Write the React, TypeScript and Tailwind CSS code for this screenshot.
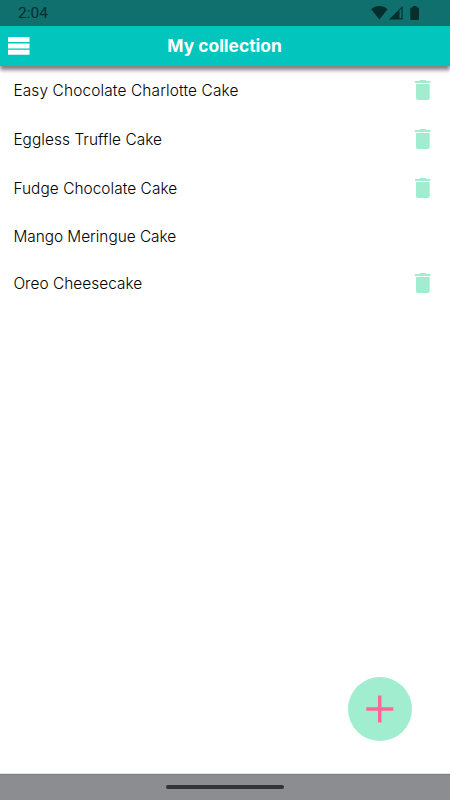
type Cake = {
  name: string;
  removable: boolean;
  tracking: string;
};

const cakes: Cake[] = [
  { name: 'Easy Chocolate Charlotte Cake', removable: true, tracking: 'tracking-[0.15px]' },
  { name: 'Eggless Truffle Cake', removable: true, tracking: 'tracking-[0.07px]' },
  { name: 'Fudge Chocolate Cake', removable: true, tracking: 'tracking-[0.06px]' },
  { name: 'Mango Meringue Cake', removable: false, tracking: 'tracking-[-0.02px]' },
  { name: 'Oreo Cheesecake', removable: true, tracking: 'tracking-[0.04px]' },
];

function StatusBar() {
  return (
    <div className="flex h-[26px] shrink-0 items-center justify-between bg-[#0f706e] pr-[30px] pl-[18px] text-[#052e2d]">
      <span className="font-[Roboto,sans-serif] text-[15.5px] leading-[26px] font-normal">
        2:04
      </span>
      <svg width="50" height="26" viewBox="370 0 50 26" fill="currentColor" aria-hidden="true">
        <path d="M371.2 9.2C373.6 7 376.4 6 379.4 6s5.8 1 8.1 3.2L379.4 19.4Z" />
        <path fillRule="evenodd" d="M389 19.6 402.6 6v13.6ZM399.5 10.5v7.7h1.9v-9.6Z" />
        <path d="M412.8 6h3.8v1.5h1.4q1 0 1 1V19q0 1-1 1h-6.8q-1 0-1-1V8.5q0-1 1-1h1.6Z" />
      </svg>
    </div>
  );
}

function Header() {
  return (
    <header className="relative flex h-[39.5px] shrink-0 items-center bg-[#02c6be] px-2 shadow-[0_4px_4px_rgba(0,0,0,0.5)]">
      <button type="button" aria-label="Menu">
        <svg width="22" height="18" viewBox="0 0 22 18" fill="white" aria-hidden="true">
          <path d="M0 0h21.5v5H0ZM0 6.4h21.5v5H0ZM0 12.8h21.5v5H0Z" />
        </svg>
      </button>
      <h1 className="flex-1 pr-[23px] text-center text-[17.4px] leading-6 font-bold text-white">
        My collection
      </h1>
    </header>
  );
}

function TrashIcon() {
  return (
    <svg width="16" height="22" viewBox="0 0 16 22" fill="#a0edcf" aria-hidden="true">
      <path d="M0 2h4l1-1h5.5l1 1h4v1.9H0ZM1 5h13.7v14q0 1.900-1.900 1.900H2.900Q1 20.900 1 19Z" />
    </svg>
  );
}

function CakeRow({ cake }: { cake: Cake }) {
  return (
    <li
      className={`flex items-center justify-between pr-[19px] pl-[13.4px] ${
        cake.removable ? 'h-[49px]' : 'h-[46px] pt-px'
      }`}
    >
      <span className={`text-[15.4px] leading-5 font-light text-black ${cake.tracking}`}>
        {cake.name}
      </span>
      {cake.removable && (
        <button type="button" aria-label={`Delete ${cake.name}`} className="mb-0.5">
          <TrashIcon />
        </button>
      )}
    </li>
  );
}

export default function App() {
  return (
    <div className="flex h-[800px] w-[450px] flex-col overflow-hidden bg-white font-[Inter,sans-serif]">
      <StatusBar />
      <Header />
      <main className="flex flex-1 flex-col justify-between">
        <ul className="pt-[0.5px]">
          {cakes.map((cake) => (
            <CakeRow key={cake.name} cake={cake} />
          ))}
        </ul>
        <button
          type="button"
          aria-label="Add cake"
          className="mr-[38px] mb-8 flex size-16 items-center justify-center self-end rounded-full bg-[#a0edcf]"
        >
          <svg width="28" height="28" viewBox="0 0 28 28" fill="#ff6699" aria-hidden="true">
            <path d="M12 0.500h3.500v11.700h11.800v3.500H15.500v11.700h-3.500V15.700H0.300v-3.500H12Z" />
          </svg>
        </button>
      </main>
      <footer className="flex h-[27px] shrink-0 items-center justify-center border-t border-[#e4e4e6] bg-[#8c8d91] shadow-[inset_0_1px_0_#7e7f83]">
        <span className="h-1 w-[118px] rounded-full bg-[#323337]" />
      </footer>
    </div>
  );
}
